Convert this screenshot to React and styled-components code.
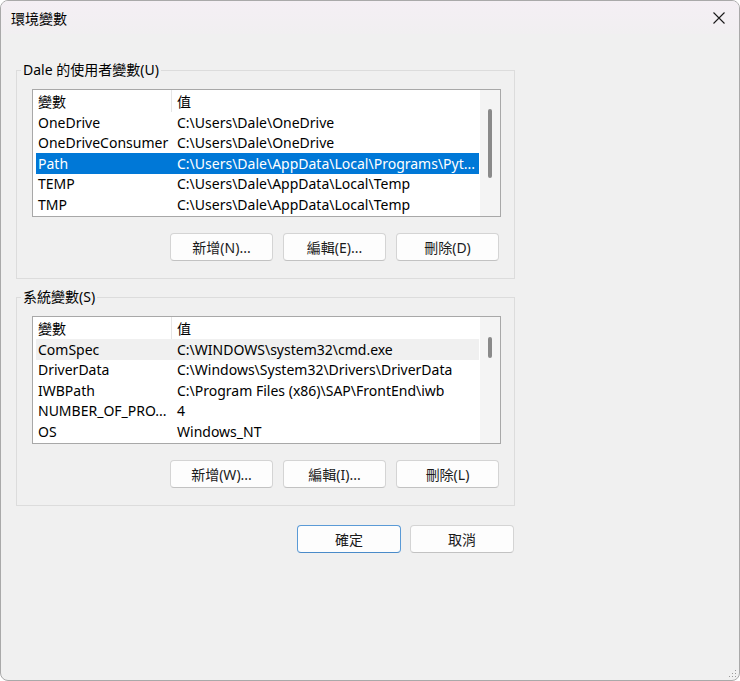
import React from "react";
import styled, { createGlobalStyle } from "styled-components";

const GlobalStyle = createGlobalStyle`
  html, body { margin: 0; padding: 0; background: #ffffff; }
  * { box-sizing: border-box; }
`;

const FONT = `"Noto Sans", "Noto Sans CJK TC", sans-serif`;

const Window = styled.div`
  width: 740px;
  height: 681px;
  border: 1px solid #a9a9a9;
  border-radius: 8px;
  background: #f0f0f0;
  overflow: hidden;
  display: flex;
  flex-direction: column;
  font-family: ${FONT};
  font-size: 14px;
  color: #000;
  position: relative;
`;

const TitleBar = styled.div`
  height: 33px;
  flex: none;
  display: flex;
  align-items: center;
  justify-content: space-between;
  padding-left: 10px;
  background: linear-gradient(180deg, #f4eff4 0%, #f1eff1 100%);
`;

const Title = styled.span`
  font-size: 14px;
  color: #000;
`;

const CloseButton = styled.button`
  width: 40px;
  height: 33px;
  border: none;
  background: transparent;
  display: flex;
  align-items: center;
  justify-content: center;
  padding: 0;
  color: #1a1a1a;
`;

const Content = styled.div`
  display: flex;
  flex-direction: column;
  padding: 26px 15px 0 15px;
  gap: 8px;
`;

const Group = styled.fieldset`
  margin: 0;
  width: 499px;
  min-width: 0;
  border: 1px solid #dcdcdc;
  border-radius: 0;
  padding: 9px 13px 17px 15px;
  display: flex;
  flex-direction: column;
  gap: 16px;
`;

const Legend = styled.legend`
  font-size: 14px;
  line-height: 20px;
  padding: 0 2px;
  margin-left: -11px;
  color: #000;
`;

const ListBox = styled.div`
  width: 469px;
  height: 128px;
  border: 1px solid #a8a8a8;
  background: #ffffff;
  display: flex;
`;

const ListBody = styled.div`
  flex: 1;
  min-width: 0;
  padding-left: 3px;
  overflow: hidden;
`;

const HeaderRow = styled.div`
  display: grid;
  grid-template-columns: 136px 1fr;
  height: 22px;
  align-items: center;
`;

const HeaderCell = styled.div`
  height: 100%;
  display: flex;
  align-items: center;
  padding-left: ${(p) => (p.$first ? "2px" : "5px")};
  border-right: ${(p) => (p.$first ? "1px solid #e5e5e5" : "none")};
  white-space: nowrap;
`;

const Row = styled.div`
  display: grid;
  grid-template-columns: 136px 1fr;
  height: 20.5px;
  align-items: center;
  margin-right: 1px;
  background: ${(p) =>
    p.$selected ? "#0078d7" : p.$hover ? "#f0f0f0" : "transparent"};
  color: ${(p) => (p.$selected ? "#ffffff" : "#000000")};
`;

const Cell = styled.div`
  padding-left: ${(p) => (p.$first ? "2px" : "5px")};
  white-space: nowrap;
  overflow: hidden;
`;

const ScrollTrack = styled.div`
  width: 20px;
  flex: none;
  background: #f4f4f4;
  display: flex;
  flex-direction: column;
  align-items: center;
`;

const ScrollThumb = styled.div`
  width: 4px;
  border-radius: 2px;
  background: #8a8a8a;
  margin-top: ${(p) => p.$top}px;
  height: ${(p) => p.$height}px;
`;

const ButtonRow = styled.div`
  width: 469px;
  padding-right: 2px;
  display: flex;
  justify-content: flex-end;
  gap: 10px;
`;

const Button = styled.button`
  width: ${(p) => p.$width || 103}px;
  height: 28px;
  border-radius: 4px;
  border: 1px solid ${(p) => (p.$default ? "#5a9ad6" : "#d4d4d4")};
  border-bottom-color: ${(p) => (p.$default ? "#4a8bc9" : "#c2c2c2")};
  background: #fdfdfd;
  font-family: ${FONT};
  font-size: 14px;
  color: #1b1b1b;
  padding: 0;
  display: flex;
  align-items: center;
  justify-content: center;
`;

const Footer = styled.div`
  width: 499px;
  margin-top: 11px;
  display: flex;
  justify-content: flex-end;
  gap: 9px;
  padding-right: 1px;
`;

const Grip = styled.div`
  position: absolute;
  right: 2px;
  bottom: 2px;
  width: 8px;
  height: 8px;
  line-height: 0;
`;

const userVars = [
  ["OneDrive", "C:\\Users\\Dale\\OneDrive"],
  ["OneDriveConsumer", "C:\\Users\\Dale\\OneDrive"],
  ["Path", "C:\\Users\\Dale\\AppData\\Local\\Programs\\Pyt...", "selected"],
  ["TEMP", "C:\\Users\\Dale\\AppData\\Local\\Temp"],
  ["TMP", "C:\\Users\\Dale\\AppData\\Local\\Temp"],
];

const sysVars = [
  ["ComSpec", "C:\\WINDOWS\\system32\\cmd.exe", "hover"],
  ["DriverData", "C:\\Windows\\System32\\Drivers\\DriverData"],
  ["IWBPath", "C:\\Program Files (x86)\\SAP\\FrontEnd\\iwb"],
  ["NUMBER_OF_PRO...", "4"],
  ["OS", "Windows_NT"],
];

function VarList({ rows, thumbTop, thumbHeight }) {
  return (
    <ListBox>
      <ListBody>
        <HeaderRow>
          <HeaderCell $first>變數</HeaderCell>
          <HeaderCell>值</HeaderCell>
        </HeaderRow>
        {rows.map(([name, value, state]) => (
          <Row
            key={name}
            $selected={state === "selected"}
            $hover={state === "hover"}
          >
            <Cell $first>{name}</Cell>
            <Cell>{value}</Cell>
          </Row>
        ))}
      </ListBody>
      <ScrollTrack>
        <ScrollThumb $top={thumbTop} $height={thumbHeight} />
      </ScrollTrack>
    </ListBox>
  );
}

export default function App() {
  return (
    <>
      <GlobalStyle />
      <Window>
        <TitleBar>
          <Title>環境變數</Title>
          <CloseButton aria-label="關閉">
            <svg width="12" height="12" viewBox="0 0 12 12">
              <path
                d="M0.5 0.5 L11.5 11.5 M11.5 0.5 L0.5 11.5"
                stroke="#1a1a1a"
                strokeWidth="1.1"
                fill="none"
              />
            </svg>
          </CloseButton>
        </TitleBar>
        <Content>
          <Group>
            <Legend>Dale 的使用者變數(U)</Legend>
            <VarList rows={userVars} thumbTop={19} thumbHeight={69} />
            <ButtonRow>
              <Button>新增(N)...</Button>
              <Button>編輯(E)...</Button>
              <Button>刪除(D)</Button>
            </ButtonRow>
          </Group>
          <Group>
            <Legend>系統變數(S)</Legend>
            <VarList rows={sysVars} thumbTop={20} thumbHeight={21} />
            <ButtonRow>
              <Button>新增(W)...</Button>
              <Button>編輯(I)...</Button>
              <Button>刪除(L)</Button>
            </ButtonRow>
          </Group>
          <Footer>
            <Button $default $width={104}>確定</Button>
            <Button $width={104}>取消</Button>
          </Footer>
        </Content>
        <Grip>
          <svg width="8" height="8" viewBox="0 0 8 8">
            <rect x="6" y="0" width="1" height="1" fill="#9a9a9a" />
            <rect x="3" y="3" width="1" height="1" fill="#9a9a9a" />
            <rect x="6" y="3" width="1" height="1" fill="#9a9a9a" />
            <rect x="0" y="6" width="1" height="1" fill="#9a9a9a" />
            <rect x="3" y="6" width="1" height="1" fill="#9a9a9a" />
            <rect x="6" y="6" width="1" height="1" fill="#9a9a9a" />
          </svg>
        </Grip>
      </Window>
    </>
  );
}
